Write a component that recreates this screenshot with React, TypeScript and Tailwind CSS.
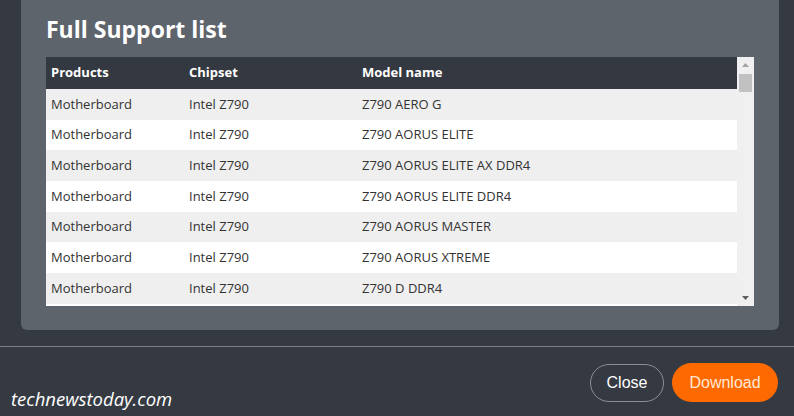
const rows = [
  'Z790 AERO G',
  'Z790 AORUS ELITE',
  'Z790 AORUS ELITE AX DDR4',
  'Z790 AORUS ELITE DDR4',
  'Z790 AORUS MASTER',
  'Z790 AORUS XTREME',
  'Z790 D DDR4',
]

export default function App() {
  return (
    <div className="flex h-[416px] w-[794px] flex-col overflow-hidden bg-[#353941] font-['Open_Sans',sans-serif]">
      <div className="px-[15px]">
        <div className="ml-[6px] h-[330px] w-[758px] rounded-b-[6px] bg-[#5e646c] px-[25px] pt-[14px]">
          <h1 className="text-[23px] font-bold leading-[30px] text-white">Full Support list</h1>
          <div className="mt-[13px] flex h-[249px] w-[708px]">
            <div className="flex w-[691px] flex-col overflow-hidden bg-white">
              <div className="flex h-[32px] shrink-0 items-center bg-[#343840] text-[13px] font-bold text-white">
                <span className="w-[143px] pl-[5px]">Products</span>
                <span className="w-[173px]">Chipset</span>
                <span>Model name</span>
              </div>
              {rows.map((m, i) => (
                <div
                  key={m}
                  className={`flex h-[30.67px] shrink-0 items-center text-[13px] text-[#333] ${i % 2 === 0 ? 'bg-[#efefef]' : 'bg-white'}`}
                >
                  <span className="w-[143px] pl-[5px]">Motherboard</span>
                  <span className="w-[173px]">Intel Z790</span>
                  <span>{m}</span>
                </div>
              ))}
            </div>
            <div className="flex w-[17px] flex-col items-center bg-[#f0f0f0]">
              <svg width="9" height="17" viewBox="0 0 9 17">
                <path d="M1 10 L4.5 6 L8 10 Z" fill="#a3a3a3" />
              </svg>
              <div className="h-[18px] w-[13px] bg-[#c1c1c1]" />
              <div className="flex-1" />
              <svg width="9" height="17" viewBox="0 0 9 17">
                <path d="M1 7 L8 7 L4.5 11 Z" fill="#606060" />
              </svg>
            </div>
          </div>
        </div>
      </div>
      <div className="mt-[16px] h-[1px] w-full bg-[#7b8087]" />
      <div className="flex flex-1 items-end justify-between pb-[4px] pl-[11px] pr-[16px]">
        <span className="text-[18.5px] italic leading-[26px] text-white">technewstoday.com</span>
        <div className="mb-[10px] flex items-center gap-[8px]">
          <button className="h-[38px] w-[74px] rounded-full border border-[#8a8f96] font-['Liberation_Sans',sans-serif] text-[16px] text-white">
            Close
          </button>
          <button className="h-[39px] w-[106px] rounded-full bg-[#ff6a00] font-['Liberation_Sans',sans-serif] text-[16px] text-[#ffe8d8]">
            Download
          </button>
        </div>
      </div>
    </div>
  )
}
